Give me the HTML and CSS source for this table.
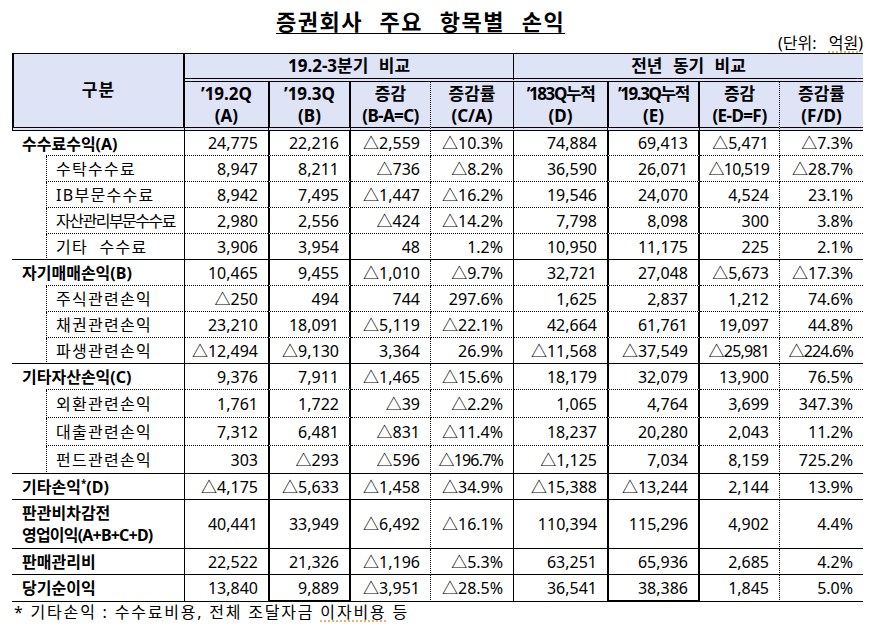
FILE: index.html
```html
<!DOCTYPE html>
<html lang="ko">
<head>
<meta charset="utf-8">
<title>증권회사 주요 항목별 손익</title>
<link rel="stylesheet" href="styles.css">
</head>
<body>
<div class="page">
  <div class="title-row"><h1 class="title">증권회사 주요 항목별 손익</h1></div>
  <div class="unit">(단위: <span class="spell">억원</span>)</div>
  <table class="pl">
    <colgroup>
      <col class="w-c0"><col class="w-c1"><col class="w-a"><col class="w-b"><col class="w-c"><col class="w-ca"><col class="w-d"><col class="w-e"><col class="w-f"><col class="w-fd">
    </colgroup>
    <thead>
      <tr class="h1">
        <th colspan="2" rowspan="2" class="lbl-h">구분</th>
        <th colspan="4" class="grp-h first">19.2-3분기 비교</th>
        <th colspan="4" class="grp-h">전년 동기 비교</th>
      </tr>
      <tr class="h2">
        <th><span class="hl">’19.2Q</span><span class="hl">(A)</span></th>
        <th><span class="hl">’19.3Q</span><span class="hl">(B)</span></th>
        <th><span class="hl">증감</span><span class="hl cond1">(B-A=C)</span></th>
        <th><span class="hl">증감률</span><span class="hl">(C/A)</span></th>
        <th><span class="hl cond2">’183Q누적</span><span class="hl">(D)</span></th>
        <th><span class="hl cond2">’19.3Q누적</span><span class="hl">(E)</span></th>
        <th><span class="hl">증감</span><span class="hl cond1">(E-D=F)</span></th>
        <th><span class="hl">증감률</span><span class="hl">(F/D)</span></th>
      </tr>
    </thead>
    <tbody>
      <tr class="dot r25">
        <td class="gl0">수수료수익(A)</td><td class="gl1"></td>
        <td>24,775</td><td>22,216</td><td>△2,559</td><td>△10.3%</td><td>74,884</td><td>69,413</td><td>△5,471</td><td>△7.3%</td>
      </tr>
      <tr class="dot r26">
        <td class="sp" rowspan="4"></td><td class="sl">수탁수수료</td>
        <td>8,947</td><td>8,211</td><td>△736</td><td>△8.2%</td><td>36,590</td><td>26,071</td><td><span class="cond">△10,519</span></td><td>△28.7%</td>
      </tr>
      <tr class="dot r26">
        <td class="sl">IB부문수수료</td>
        <td>8,942</td><td>7,495</td><td>△1,447</td><td>△16.2%</td><td>19,546</td><td>24,070</td><td>4,524</td><td>23.1%</td>
      </tr>
      <tr class="dot r26">
        <td class="sl"><span class="squeeze">자산관리부문수수료</span></td>
        <td>2,980</td><td>2,556</td><td>△424</td><td>△14.2%</td><td>7,798</td><td>8,098</td><td>300</td><td>3.8%</td>
      </tr>
      <tr class="sol r26">
        <td class="sl"><span class="ws">기타 수수료</span></td>
        <td>3,906</td><td>3,954</td><td>48</td><td>1.2%</td><td>10,950</td><td>11,175</td><td>225</td><td>2.1%</td>
      </tr>

      <tr class="dot r26">
        <td class="gl0">자기매매손익(B)</td><td class="gl1"></td>
        <td>10,465</td><td>9,455</td><td>△1,010</td><td>△9.7%</td><td>32,721</td><td>27,048</td><td>△5,673</td><td>△17.3%</td>
      </tr>
      <tr class="dot r26">
        <td class="sp" rowspan="3"></td><td class="sl">주식관련손익</td>
        <td>△250</td><td>494</td><td>744</td><td>297.6%</td><td>1,625</td><td>2,837</td><td>1,212</td><td>74.6%</td>
      </tr>
      <tr class="dot r26">
        <td class="sl">채권관련손익</td>
        <td>23,210</td><td>18,091</td><td>△5,119</td><td>△22.1%</td><td>42,664</td><td>61,761</td><td>19,097</td><td>44.8%</td>
      </tr>
      <tr class="sol r26">
        <td class="sl">파생관련손익</td>
        <td>△12,494</td><td>△9,130</td><td>3,364</td><td>26.9%</td><td>△11,568</td><td>△37,549</td><td><span class="cond">△25,981</span></td><td><span class="cond">△224.6%</span></td>
      </tr>

      <tr class="dot r26">
        <td class="gl0">기타자산손익(C)</td><td class="gl1"></td>
        <td>9,376</td><td>7,911</td><td>△1,465</td><td>△15.6%</td><td>18,179</td><td>32,079</td><td>13,900</td><td>76.5%</td>
      </tr>
      <tr class="dot r28">
        <td class="sp" rowspan="3"></td><td class="sl">외환관련손익</td>
        <td>1,761</td><td>1,722</td><td>△39</td><td>△2.2%</td><td>1,065</td><td>4,764</td><td>3,699</td><td>347.3%</td>
      </tr>
      <tr class="dot r28">
        <td class="sl">대출관련손익</td>
        <td>7,312</td><td>6,481</td><td>△831</td><td>△11.4%</td><td>18,237</td><td>20,280</td><td>2,043</td><td>11.2%</td>
      </tr>
      <tr class="sol r28">
        <td class="sl">펀드관련손익</td>
        <td>303</td><td>△293</td><td>△596</td><td><span class="cond">△196.7%</span></td><td>△1,125</td><td>7,034</td><td>8,159</td><td>725.2%</td>
      </tr>

      <tr class="sol r26">
        <td class="gl" colspan="2">기타손익<sup>*</sup>(D)</td>
        <td>△4,175</td><td>△5,633</td><td>△1,458</td><td>△34.9%</td><td>△15,388</td><td>△13,244</td><td>2,144</td><td>13.9%</td>
      </tr>
      <tr class="sol r49">
        <td class="gl" colspan="2"><span class="hl2">판관비차감전</span><span class="hl2 cond">영업이익(A+B+C+D)</span></td>
        <td>40,441</td><td>33,949</td><td>△6,492</td><td>△16.1%</td><td>110,394</td><td>115,296</td><td>4,902</td><td>4.4%</td>
      </tr>
      <tr class="sol r26">
        <td class="gl" colspan="2">판매관리비</td>
        <td>22,522</td><td>21,326</td><td>△1,196</td><td>△5.3%</td><td>63,251</td><td>65,936</td><td>2,685</td><td>4.2%</td>
      </tr>
      <tr class="sol r26 last">
        <td class="gl" colspan="2">당기순이익</td>
        <td>13,840</td><td>9,889</td><td>△3,951</td><td>△28.5%</td><td>36,541</td><td>38,386</td><td>1,845</td><td>5.0%</td>
      </tr>
    </tbody>
  </table>
  <p class="note">* 기타손익 : 수수료비용, 전체 조달자금 <span class="spell">이자비용</span> 등</p>
</div>
</body>
</html>
```

FILE: styles.css
```css
html, body {
  margin: 0;
  padding: 0;
  background: #fff;
}
body {
  font-family: "Noto Sans", "Noto Sans CJK KR", sans-serif;
  color: #000;
}
.page {
  width: 879px;
}
.title-row {
  box-sizing: border-box;
  height: 34px;
  padding-top: 7px;
  padding-left: 276px;
}
.title {
  display: inline-block;
  margin: 0;
  font-family: "Noto Sans CJK KR", sans-serif;
  font-size: 22px;
  line-height: 26px;
  font-weight: 700;
  letter-spacing: 1.5px;
  word-spacing: 9px;
  border-bottom: 1px solid #000;
}
.unit {
  height: 19px;
  line-height: 19px;
  font-size: 16px;
  text-align: right;
  padding-right: 16px;
  word-spacing: 8px;
}
.spell {
  text-decoration: underline dotted #e8a040;
  text-underline-offset: 3px;
}
.pl {
  margin-left: 12px;
  width: 851px;
  table-layout: fixed;
  border-collapse: separate;
  border-spacing: 0;
  font-size: 16px;
}
.w-c0 { width: 34px; }
.w-c1 { width: 139px; }
.w-a { width: 83px; }
.w-b { width: 83px; }
.w-c { width: 80px; }
.w-ca { width: 83px; }
.w-d { width: 93px; }
.w-e { width: 93px; }
.w-f { width: 80px; }
.w-fd { width: 83px; }

th, td {
  padding: 0;
  border: 0;
  white-space: nowrap;
}
th {
  background: #dfe3f6;
  font-weight: 700;
  font-size: 17px;
  text-align: center;
  vertical-align: middle;
  line-height: 20px;
}
.hl {
  display: block;
  line-height: 22px;
}
.hl2 {
  display: block;
  line-height: 22px;
}
.h1 th {
  height: 24px;
  border-top: 1px solid #000;
  border-bottom: 4px double #000;
  word-spacing: 6px;
}
.h1 .lbl-h {
  border-right: 1px solid #000;
  padding-bottom: 2px;
  letter-spacing: 1px;
}
.h1 .grp-h.first {
  border-right: 1px solid #000;
}
.h2 th {
  height: 45px;
  border-bottom: 4px double #000;
}

/* column rules (value cells are always the last eight in a row) */
.pl tr > :nth-last-child(9) { border-right: 1px solid #000; }
.pl tr > :nth-last-child(7),
.pl tr > :nth-last-child(3) {
  border-left: 2px solid #000;
  border-right: 2px solid #000;
}
.pl tr > :nth-last-child(6),
.pl tr > :nth-last-child(2) { border-right: 1px dotted #000; }
.pl tr > :nth-last-child(5) { border-right: 1px solid #000; }
.h1 th { border-left: 0; }
.h1 .grp-h:last-child { border-right: 0; }

td {
  text-align: right;
  vertical-align: middle;
  padding-right: 10px;
  line-height: 20px;
}
tr.dot > td { border-bottom: 1px dotted #000; }
tr.sol > td { border-bottom: 1px solid #000; }
tr.last > td:nth-last-child(7),
tr.last > td:nth-last-child(3) { border-bottom: 2px solid #000; }

tr.r25 > td { height: 24px; }
tr.r26 > td { height: 25px; }
tr.r28 > td { height: 27px; }
tr.r49 > td { height: 48px; }

td.gl0 {
  text-align: left;
  padding: 0 0 0 10px;
  font-weight: 700;
  overflow: visible;
}
tr.dot > td.gl0 { border-bottom: 0; }
td.gl1 { padding: 0; }
td.gl {
  text-align: left;
  padding: 0 0 0 10px;
  font-weight: 700;
}
td.gl sup {
  font-size: 10px;
  line-height: 0;
  vertical-align: 6px;
}
td.sp {
  padding: 0;
  border-bottom: 1px solid #000 !important;
}
td.sl {
  text-align: left;
  padding: 0 0 0 9px;
  border-left: 1px dotted #000;
  letter-spacing: 1.3px;
}
.ws { word-spacing: 6px; }
.squeeze {
  letter-spacing: -1.5px;
}
.cond { letter-spacing: -0.8px; }
.cond1 { letter-spacing: -0.6px; }
.cond2 { letter-spacing: -1.4px; }

.note {
  margin: 0 0 0 14px;
  font-size: 16px;
  line-height: 20px;
  letter-spacing: 1.8px;
}
```
